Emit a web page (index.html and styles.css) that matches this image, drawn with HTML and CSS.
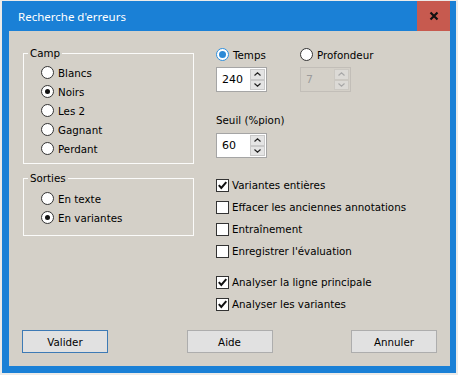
FILE: index.html
```html
<!DOCTYPE html>
<html lang="fr">
<head>
    <meta charset="UTF-8">
    <title>Recherche d'erreurs</title>
    <link rel="stylesheet" href="styles.css">
</head>
<body>
    <div class="window">
        <div class="titlebar">
            <span class="title">Recherche d'erreurs</span>
            <div class="close">
                <svg width="10" height="10" viewBox="0 0 10 10">
                    <path d="M1.5 1.5 L8.5 8.5 M8.5 1.5 L1.5 8.5" stroke="#111" stroke-width="2.2" fill="none"/>
                </svg>
            </div>
        </div>

        <div class="client">
            <div class="main">
                <!-- Colonne gauche : groupes -->
                <div class="left">
                    <div class="group group-camp">
                        <span class="legend">Camp</span>
                        <label class="opt"><span class="radio"></span>Blancs</label>
                        <label class="opt"><span class="radio checked"></span>Noirs</label>
                        <label class="opt"><span class="radio"></span>Les 2</label>
                        <label class="opt"><span class="radio"></span>Gagnant</label>
                        <label class="opt"><span class="radio"></span>Perdant</label>
                    </div>
                    <div class="group group-sorties">
                        <span class="legend">Sorties</span>
                        <label class="opt"><span class="radio"></span>En texte</label>
                        <label class="opt"><span class="radio checked"></span>En variantes</label>
                    </div>
                </div>

                <!-- Colonne droite : réglages -->
                <div class="right">
                    <div class="mode-row">
                        <label class="opt mode"><span class="radio focus"></span>Temps</label>
                        <label class="opt"><span class="radio"></span>Profondeur</label>
                    </div>
                    <div class="spin-row">
                        <div class="spin">
                            <span class="spin-value">240</span>
                            <div class="spin-btns">
                                <span class="spin-btn"><svg width="7" height="4" viewBox="0 0 7 4"><path d="M0.5 3.5 L3.5 0.8 L6.5 3.5" stroke="#222" stroke-width="1.2" fill="none"/></svg></span>
                                <span class="spin-btn"><svg width="7" height="4" viewBox="0 0 7 4"><path d="M0.5 0.5 L3.5 3.2 L6.5 0.5" stroke="#222" stroke-width="1.2" fill="none"/></svg></span>
                            </div>
                        </div>
                        <div class="spin disabled">
                            <span class="spin-value">7</span>
                            <div class="spin-btns">
                                <span class="spin-btn"><svg width="7" height="4" viewBox="0 0 7 4"><path d="M0.5 3.5 L3.5 0.8 L6.5 3.5" stroke="#a8a8a8" stroke-width="1.2" fill="none"/></svg></span>
                                <span class="spin-btn"><svg width="7" height="4" viewBox="0 0 7 4"><path d="M0.5 0.5 L3.5 3.2 L6.5 0.5" stroke="#a8a8a8" stroke-width="1.2" fill="none"/></svg></span>
                            </div>
                        </div>
                    </div>

                    <div class="field-label">Seuil (%pion)</div>
                    <div class="spin seuil">
                        <span class="spin-value">60</span>
                        <div class="spin-btns">
                            <span class="spin-btn"><svg width="7" height="4" viewBox="0 0 7 4"><path d="M0.5 3.5 L3.5 0.8 L6.5 3.5" stroke="#222" stroke-width="1.2" fill="none"/></svg></span>
                            <span class="spin-btn"><svg width="7" height="4" viewBox="0 0 7 4"><path d="M0.5 0.5 L3.5 3.2 L6.5 0.5" stroke="#222" stroke-width="1.2" fill="none"/></svg></span>
                        </div>
                    </div>

                    <div class="checks">
                        <label class="check-row"><span class="check"><svg width="11" height="11" viewBox="0 0 11 11"><path d="M1.8 5.2 L4.3 8 L9.3 2.2" stroke="#111" stroke-width="2" fill="none"/></svg></span>Variantes entières</label>
                        <label class="check-row"><span class="check"></span>Effacer les anciennes annotations</label>
                        <label class="check-row"><span class="check"></span>Entraînement</label>
                        <label class="check-row"><span class="check"></span>Enregistrer l'évaluation</label>
                    </div>
                    <div class="checks checks-analyse">
                        <label class="check-row"><span class="check"><svg width="11" height="11" viewBox="0 0 11 11"><path d="M1.8 5.2 L4.3 8 L9.3 2.2" stroke="#111" stroke-width="2" fill="none"/></svg></span>Analyser la ligne principale</label>
                        <label class="check-row"><span class="check"><svg width="11" height="11" viewBox="0 0 11 11"><path d="M1.8 5.2 L4.3 8 L9.3 2.2" stroke="#111" stroke-width="2" fill="none"/></svg></span>Analyser les variantes</label>
                    </div>
                </div>
            </div>

            <div class="footer">
                <button class="btn btn-default">Valider</button>
                <button class="btn">Aide</button>
                <button class="btn">Annuler</button>
            </div>
        </div>
    </div>
</body>
</html>
```

FILE: styles.css
```css
* {
    box-sizing: border-box;
}

body {
    margin: 0;
    background-color: #ecebe9;
    font-family: 'DejaVu Sans', sans-serif;
    font-size: 10.3px;
    color: #000;
}

/* Fenêtre */
.window {
    margin: 1px 0 0 2px;
    width: 454px;
    height: 372px;
    background-color: #1a80d6;
    padding: 0 6px 7px 7px;
    display: flex;
    flex-direction: column;
}

.titlebar {
    height: 30px;
    display: flex;
    align-items: center;
    justify-content: space-between;
    flex-shrink: 0;
}

.title {
    padding-left: 9px;
    color: #fff;
    font-family: 'Noto Sans', sans-serif;
    font-size: 11.5px;
}

.close {
    width: 33px;
    height: 30px;
    background-color: #c75a4f;
    display: flex;
    align-items: center;
    justify-content: center;
}

.client {
    flex: 1;
    background-color: #d4d0c8;
    display: flex;
    flex-direction: column;
    padding: 0 13px 13px 13px;
}

.main {
    display: flex;
    align-items: flex-start;
}

/* Groupes */
.left {
    padding-top: 22px;
    padding-left: 1px;
}

.group {
    width: 171px;
    border: 1px solid #fbfbfa;
    padding: 0 0 5px 17px;
}

.group-sorties {
    margin-top: 14px;
    padding-bottom: 8px;
}

.legend {
    display: table;
    height: 13px;
    line-height: 13px;
    margin: -7px 0 3px -13px;
    padding: 0 2px;
    background-color: #d4d0c8;
}

.group-sorties .legend {
    margin-bottom: 4px;
}

.opt {
    display: flex;
    align-items: center;
    height: 19px;
    white-space: nowrap;
}

.radio {
    width: 13px;
    height: 13px;
    border: 1px solid #333;
    border-radius: 50%;
    background-color: #fff;
    margin-right: 4px;
    display: flex;
    align-items: center;
    justify-content: center;
    flex-shrink: 0;
}

.radio.checked::after {
    content: "";
    width: 5px;
    height: 5px;
    border-radius: 50%;
    background-color: #111;
}

.radio.focus {
    border-color: #2f8fdc;
}

.radio.focus::after {
    content: "";
    width: 7px;
    height: 7px;
    border-radius: 50%;
    background-color: #2d8ad6;
}

/* Colonne droite */
.right {
    margin-left: 22px;
    padding-top: 14px;
}

.mode-row {
    display: flex;
}

.mode {
    width: 84px;
}

.spin-row {
    display: flex;
    gap: 33px;
    margin-top: 3px;
}

.spin {
    width: 51px;
    height: 25px;
    display: flex;
    border: 1px solid #a5a5a5;
    background-color: #fff;
}

.spin-value {
    flex: 1;
    padding-left: 5px;
    line-height: 23px;
    font-size: 11px;
}

.spin-btns {
    width: 16px;
    display: flex;
    flex-direction: column;
    padding: 1px 1px 1px 0;
}

.spin-btn {
    flex: 1;
    background-color: #e4e4e4;
    border: 1px solid #c9c9c9;
    display: flex;
    align-items: center;
    justify-content: center;
}

.spin.disabled {
    background-color: #d4d0c8;
    border-color: #c2beb8;
    color: #9c9c9c;
}

.spin.disabled .spin-btn {
    background-color: #dcdad6;
    border-color: #cbc8c2;
}

.field-label {
    margin-top: 21px;
    line-height: 15px;
}

.seuil {
    margin-top: 5px;
}

.checks {
    margin-top: 16px;
}

.checks-analyse {
    margin-top: 9px;
}

.check-row {
    display: flex;
    align-items: center;
    height: 22px;
    white-space: nowrap;
}

.check {
    width: 13px;
    height: 13px;
    border: 1px solid #333;
    background-color: #fff;
    margin-right: 3px;
    display: flex;
    align-items: center;
    justify-content: center;
    flex-shrink: 0;
}

/* Boutons */
.footer {
    margin-top: auto;
    display: flex;
    justify-content: space-between;
}

.btn {
    width: 86px;
    height: 23px;
    background-color: #e1e1e1;
    border: 1px solid #adadad;
    font-family: 'DejaVu Sans', sans-serif;
    font-size: 10.3px;
    color: #000;
    padding: 0;
}

.btn-default {
    border-color: #3d7ab5;
}
```
